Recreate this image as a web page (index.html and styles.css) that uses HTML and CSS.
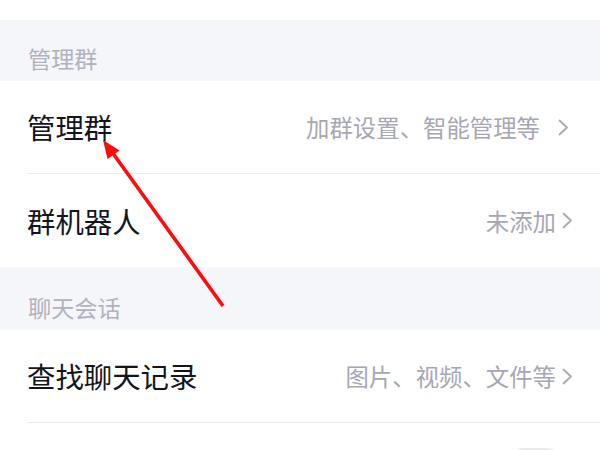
FILE: index.html
```html
<!DOCTYPE html>
<html lang="zh-CN">
<head>
<meta charset="utf-8">
<title>群设置</title>
<link rel="stylesheet" href="styles.css">
</head>
<body>
<div class="page">
  <div class="top-gap"></div>

  <div class="section-header">管理群</div>
  <div class="row">
    <div class="row-inner divider pad-wide">
      <span class="label">管理群</span>
      <span class="value">加群设置、智能管理等</span>
      <svg class="chev chev-wide" width="11" height="17" viewBox="0 0 11 17"><path d="M1.5 1.5 L9 8.5 L1.5 15.5" fill="none" stroke="#a9a9b6" stroke-width="1.8" stroke-linecap="round" stroke-linejoin="round"/></svg>
    </div>
  </div>
  <div class="row">
    <div class="row-inner tall">
      <span class="label">群机器人</span>
      <span class="value">未添加</span>
      <svg class="chev" width="11" height="17" viewBox="0 0 11 17"><path d="M1.5 1.5 L9 8.5 L1.5 15.5" fill="none" stroke="#a9a9b6" stroke-width="1.8" stroke-linecap="round" stroke-linejoin="round"/></svg>
    </div>
  </div>

  <div class="section-header tall-header">聊天会话</div>
  <div class="row">
    <div class="row-inner divider">
      <span class="label">查找聊天记录</span>
      <span class="value">图片、视频、文件等</span>
      <svg class="chev" width="11" height="17" viewBox="0 0 11 17"><path d="M1.5 1.5 L9 8.5 L1.5 15.5" fill="none" stroke="#a9a9b6" stroke-width="1.8" stroke-linecap="round" stroke-linejoin="round"/></svg>
    </div>
  </div>
  <div class="row">
    <div class="row-inner toggle-row">
      <span class="label"></span>
      <span class="toggle"></span>
    </div>
  </div>

  <svg class="arrow" width="600" height="450" viewBox="0 0 600 450">
    <line x1="223" y1="306" x2="112" y2="152" stroke="#ff0b0b" stroke-width="3.6"/>
    <polygon points="103,140 119.5,150.5 107.5,159" fill="#ff0b0b"/>
  </svg>
</div>
</body>
</html>
```
FILE: styles.css
```css
html, body {
  margin: 0;
  padding: 0;
  background: #ffffff;
}
body {
  font-family: "Noto Sans CJK SC", "Noto Sans", sans-serif;
}
.page {
  position: relative;
  width: 600px;
  height: 450px;
  overflow: hidden;
  background: #ffffff;
}
.top-gap {
  height: 20px;
  background: #ffffff;
}
.section-header {
  box-sizing: border-box;
  height: 61px;
  padding: 0 28px 11px;
  display: flex;
  align-items: flex-end;
  background: #f5f6fa;
  color: #b2b2be;
  font-size: 23.2px;
  line-height: 23px;
}
.tall-header {
  height: 63px;
}
.row {
  padding-left: 27px;
  background: #ffffff;
}
.row-inner {
  box-sizing: border-box;
  height: 92px;
  display: flex;
  align-items: center;
  padding-right: 27px;
}
.row-inner.tall {
  height: 93px;
}
.row-inner.divider {
  height: 93px;
  border-bottom: 1px solid #ebebf1;
}
.row-inner.pad-wide {
  padding-right: 31px;
}
.label {
  flex: 1;
  color: #13151e;
  font-size: 28.4px;
  line-height: 28px;
}
.value {
  color: #a7a7b4;
  font-size: 23.4px;
  line-height: 24px;
}
.chev {
  display: block;
  margin-left: 6px;
}
.chev-wide {
  margin-left: 18px;
}
.toggle-row {
  align-items: flex-start;
  padding-top: 25px;
  padding-right: 38px;
}
.toggle {
  display: block;
  width: 54px;
  height: 32px;
  border-radius: 16px;
  background: #e9e9f0;
}
.arrow {
  position: absolute;
  left: 0;
  top: 0;
  pointer-events: none;
}
```
